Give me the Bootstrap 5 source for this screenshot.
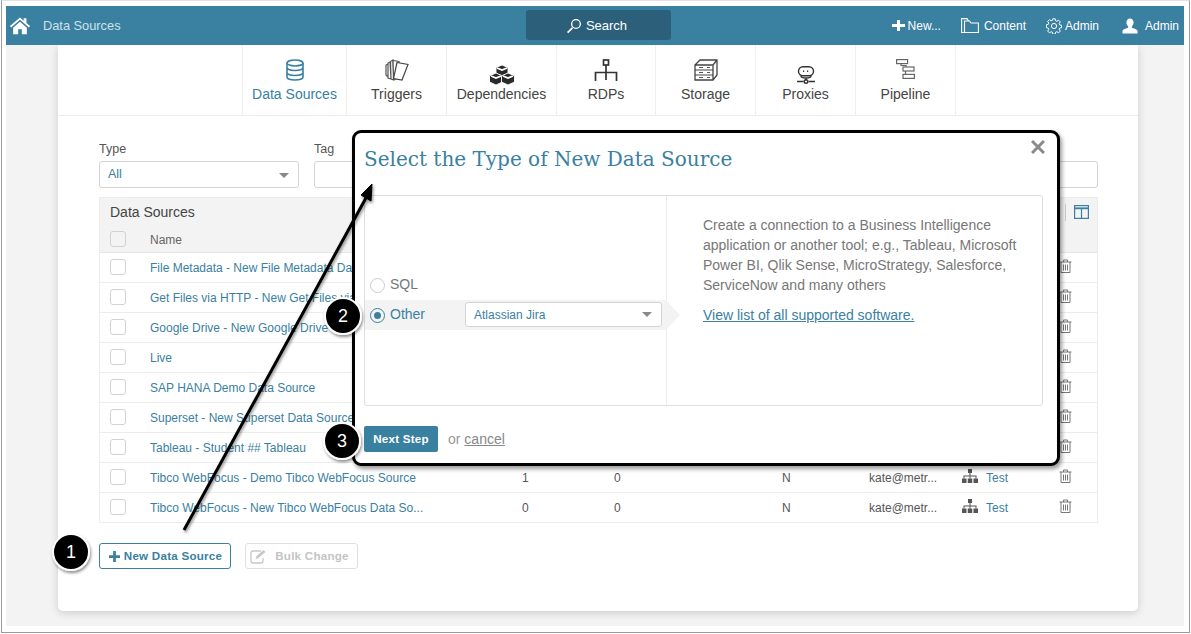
<!DOCTYPE html>
<html lang="en">
<head>
<meta charset="utf-8">
<title>Data Sources</title>
<link href="https://cdn.jsdelivr.net/npm/bootstrap@5.3.0/dist/css/bootstrap.min.css" rel="stylesheet">
<style>
html,body{height:100%;margin:0;background:#fff;overflow:hidden}
body{font-family:"Liberation Sans",Arial,sans-serif;font-size:12px;color:#555}
.shot{position:relative;width:1191px;height:634px;background:#fff;overflow:hidden}
.frame{position:absolute;inset:0 1px 1px 1px;border:1px solid #9a9a9a;border-top-color:#e2e2e2;padding:5px 5px 6px 4px;display:flex;flex-direction:column}
.topbar{height:39px;background:#3a80a1;color:#fff;flex:none;position:relative}
.topbar svg{flex:none}
.crumb{color:#cfe2ea;font-size:12.8px;margin-left:12px}
.searchbox{position:absolute;left:520px;top:4px;width:145px;height:30px;background:#2c5f79;border-radius:3px;font-size:13px;color:#fff;padding-top:1px}
.topact{font-size:12px;color:#fff;white-space:nowrap}
.stage{flex:1;background:#f3f3f3;min-height:0;padding:0 46px 15px 52px;display:flex}
.sheet{flex:1;min-width:0;background:#fff;border-radius:0 0 5px 5px;box-shadow:0 2px 8px rgba(0,0,0,.16);display:flex;flex-direction:column}
.tabstrip{height:71px;border-bottom:1px solid #ececec;padding-left:184px;flex:none}
.tabitem{height:70px;border-left:1px solid #efefef;display:flex;flex-direction:column;align-items:center;font-size:14px;color:#444;padding-top:14px}
.tabitem:last-child{border-right:1px solid #efefef}
.tabitem .ti{height:26px;display:flex;align-items:flex-start;justify-content:center}
.tabitem span{line-height:17px;margin-top:1px}
.tabitem.on{color:#3a80a1}
.lower5{margin-top:6px}
.lower7{margin-top:7px}
.fbar{padding:26px 40px 0 41px;gap:15px}
.flabel{font-size:12.5px;color:#555;line-height:14px;margin-bottom:5px}
.fsel{height:27px;border:1px solid #d4d4d4;border-radius:3px;color:#3a80a1;padding:0 8px;font-size:12.5px;line-height:25px;position:relative}
.caret{position:absolute;right:9px;top:11px;width:0;height:0;border-left:5px solid transparent;border-right:5px solid transparent;border-top:5px solid #888}
.dtable{margin:9px 40px 0 41px;border:1px solid #ececec;border-top:0}
.dhead{height:30px;background:#f3f3f3;font-size:14px;color:#444;padding:0 10px;line-height:28px;position:relative;border-top:1px solid #ececec}
.dhead .sep{position:absolute;left:965px;top:6px;width:1px;height:17px;background:#ccc}
.dhead svg{position:absolute;left:974px;top:7px}
.dtable table{table-layout:fixed;width:100%;margin:0;font-size:12px}
.dtable th,.dtable td{padding:2px 0 0;height:30px;vertical-align:middle;border-bottom:1px solid #ececec;color:#555;background:transparent;font-weight:400;white-space:nowrap;overflow:hidden;text-overflow:ellipsis;box-shadow:none}
.dtable td:first-child,.dtable th:first-child{padding-top:0}
.dtable tr:last-child td{border-bottom:0}
.dtable th{height:25px;background:#f3f3f3;border-bottom:1px solid #e6e6e6;color:#666}
.dtable td a,.lnk{color:#3a80a1;text-decoration:none}
.cbx{width:16px;height:16px;border:1px solid #d2d2d2;border-radius:3px;display:block;margin-left:10px;background:#fff}
.dtable th .cbx{background:#f3f3f3}
.btnrow{padding:20px 41px 0;gap:14px}
.btn-new{height:26px;width:132px;padding:0 0 0 1px;border:1px solid #3a80a1;border-radius:3px;color:#3a80a1;background:#fff;font-size:11.6px;font-weight:700;letter-spacing:.25px}
.btn-new svg{fill:#3a80a1}
.btn-bulk{height:26px;width:113px;padding:0 4px 0 0;border:1px solid #dfdfdf;border-radius:3px;color:#c4c4c4;background:#fff;font-size:11.6px;font-weight:700;letter-spacing:.25px}
.dlg{position:absolute;left:352px;top:130px;width:708px;height:336px;background:#fff;border:3px solid #000;border-radius:9px;box-shadow:2px 3px 4px rgba(0,0,0,.4)}
.dlg h2{font-family:"DejaVu Serif",serif;font-weight:400;font-size:20px;color:#3a80a1;margin:0;position:absolute;left:9px;top:14px;white-space:nowrap}
.dlg .xclose{position:absolute;right:12px;top:7px}
.dbody{position:absolute;left:9px;top:62px;width:679px;height:211px;border:1px solid #dedede;border-radius:3px}
.dleft{width:302px;flex:none;border-right:1px solid #ececec;position:relative;padding-top:74px}
.optrow{height:30px;font-size:14px;padding-left:5px;gap:5px;color:#777}
.optrow span{margin-top:-2px}
.optrow.on{background:#f3f3f3;color:#3a80a1;position:relative}
.optrow.on::after{content:"";position:absolute;left:301px;top:0;border-left:14px solid #f3f3f3;border-top:15px solid transparent;border-bottom:15px solid transparent}
.rad{width:15px;height:15px;border:1.5px solid #ccc;border-radius:50%;flex:none}
.rad.on{border-color:#3a80a1;position:relative}
.rad.on::after{content:"";position:absolute;inset:3px;border-radius:50%;background:#3a80a1}
.dsel{position:absolute;left:100px;top:2px;width:197px;height:25px;border:1px solid #d4d4d4;border-radius:3px;background:#fff;font-size:12px;color:#3a80a1;line-height:25px;padding-left:8px}
.dsel .caret{top:9px}
.dright{padding:19px 20px 0 36px;font-size:14px;line-height:20px;color:#777}
.dright p{margin:0 0 10px}
.dright a{color:#3a80a1;text-decoration:underline}
.dfoot{position:absolute;left:9px;top:293px;gap:10px;font-size:14px;color:#999}
.btn-next{height:26px;width:74px;padding:0;border:0;border-radius:2px;background:#3a80a1;color:#fff;font-size:11.6px;font-weight:700;letter-spacing:.25px}
.dfoot a{color:#888;text-decoration:underline}
.notes{position:absolute;left:0;top:0;pointer-events:none}
.notes text{font-family:"Liberation Sans",Arial,sans-serif;font-size:18px;font-weight:400;fill:#fff;text-anchor:middle}
</style>
</head>
<body>
<div class="shot">
<div class="frame">
  <div class="topbar d-flex align-items-center">
    <svg style="margin-left:3px" width="22" height="19" viewBox="0 0 24 20" fill="#fff"><path d="M12 1.200 1 10.600l1.300 1.500L12 3.800l9.700 8.300 1.300-1.500-4-3.400V2.200h-3v2.500zM4.500 12.500V19.500h5.500v-5.500h4v5.500h5.500v-7L12 6z"/></svg>
    <span class="crumb">Data Sources</span>
    <div class="searchbox d-flex align-items-center justify-content-center gap-1">
      <svg width="16" height="16" viewBox="0 0 16 16" fill="#fff" style="margin-left:-4px"><path d="M10 1a5 5 0 1 0 0 10 5 5 0 0 0 0-10zm0 1.300a3.700 3.700 0 1 1 0 7.400 3.700 3.700 0 0 1 0-7.400zM5.800 9.200 1 14l1.200 1.200L7 10.400z"/></svg><span>Search</span>
    </div>
    <div class="ms-auto d-flex align-items-center topact">
      <svg width="13" height="11" viewBox="0 0 13 11" fill="#fff"><path d="M5 0h3v4h5v3H8v4H5V7H0V4h5z"/></svg>
      <span style="margin-left:3px">New...</span>
      <svg style="margin-left:20px" width="18" height="15" viewBox="0 0 18 15" fill="none" stroke="#fff" stroke-width="1.100"><path d="M3.500 14.500H.6V.6h5.400l1.500 2.400"/><path d="M3.500 14.500V3h5l1.500 2h7.400v9.500z"/></svg>
      <span style="margin-left:5px">Content</span>
      <svg style="margin-left:20px" width="16" height="16" viewBox="0 0 16 16" fill="none" stroke="#fff" stroke-width="1"><path d="M6.800.8h2.400l.4 2 1.300.5 1.700-1.100 1.700 1.700-1.100 1.700.5 1.300 2 .4v2.400l-2 .4-.5 1.300 1.100 1.700-1.700 1.700-1.700-1.100-1.300.5-.4 2H6.800l-.4-2-1.300-.5-1.700 1.100-1.700-1.700 1.100-1.700-.5-1.300-2-.4V6.800l2-.4.500-1.300-1.100-1.700 1.700-1.700 1.700 1.100 1.300-.5z"/><circle cx="8" cy="8" r="2.600"/></svg>
      <span style="margin-left:3px">Admin</span>
      <svg style="margin-left:23px" width="16" height="16" viewBox="0 0 17 16" fill="#fff"><path d="M8.500 0c2.300 0 3.800 1.800 3.800 4.300 0 1.700-.8 3.200-1.800 4.100v1.400c2 .7 5.500 1.700 6 3.200v3H.5v-3c.5-1.500 4-2.500 6-3.200V8.400C5.500 7.500 4.700 6 4.700 4.300 4.700 1.800 6.200 0 8.500 0z"/></svg>
      <span style="margin-left:7px;margin-right:5px">Admin</span>
    </div>
  </div>
  <div class="stage">
    <div class="sheet">
      <div class="tabstrip d-flex">
        <div class="tabitem on" style="width:104px"><div class="ti"><svg width="18" height="22" viewBox="0 0 18 22" fill="none" stroke="#3a80a1" stroke-width="1.600"><ellipse cx="9" cy="4" rx="8" ry="3"/><path d="M1 4v14c0 1.700 3.600 3 8 3s8-1.300 8-3V4M1 8.500c0 1.700 3.600 3 8 3s8-1.300 8-3M1 13.500c0 1.700 3.600 3 8 3s8-1.300 8-3"/></svg></div><span>Data Sources</span></div>
        <div class="tabitem" style="width:100px"><div class="ti"><svg width="24" height="22" viewBox="0 0 24 22" fill="#fff" stroke="#555" stroke-width="1.200"><path d="M3 5 1 6v10l2 2zM5 3 3 4v15l3 1zM8 1 5.500 2.500 6 20l3 1z"/><path d="M8 1.500l6 1-1 17-4.500 1z"/><path d="M12 3.500l11 2-6 15.500-8.500-1.500z" stroke="#444"/></svg></div><span>Triggers</span></div>
        <div class="tabitem" style="width:110px"><div class="ti"><svg class="lower5" width="26" height="20" viewBox="0 0 26 20" fill="#2a2a2a" stroke="#fff" stroke-width=".9"><path d="M13 0l6 2.500v6L13 11 7 8.500v-6z"/><path d="M7 8l6.500 2.800v6.200L7 20 .5 17v-6.200z"/><path d="M19 8l6.500 2.800v6.200L19 20l-6.500-3v-6.200z"/><path d="M8 3l5 2 5-2" stroke-width="1.800"/><path d="M2 11l5 2 5-2M14 11l5 2 5-2" stroke-width="1.800" fill="none"/></svg></div><span>Dependencies</span></div>
        <div class="tabitem" style="width:99px"><div class="ti"><svg width="24" height="22" viewBox="0 0 24 22" fill="none" stroke="#333" stroke-width="1.700"><rect x="9.500" y="1" width="5" height="5"/><path d="M12 6v15M1.500 22v-8.500h21V22"/></svg></div><span>RDPs</span></div>
        <div class="tabitem" style="width:100px"><div class="ti"><svg width="24" height="22" viewBox="0 0 24 22" fill="none" stroke="#444" stroke-width="1.300"><path d="M1 6h18v15H1zM1 6l5-5h17v15l-4 5M19 6l4-5"/><path d="M1 11h18M1 16h18" stroke-width="1"/><path d="M5 8.500h4M5 13.500h4M5 18.500h4" stroke-width=".9"/><path d="M13 8.500h3M13 13.500h3M13 18.500h3" stroke-width=".9"/></svg></div><span>Storage</span></div>
        <div class="tabitem" style="width:100px"><div class="ti"><svg class="lower7" width="18" height="18" viewBox="0 0 18 18" fill="none" stroke="#333" stroke-width="1.400"><rect x="1.500" y=".8" width="15" height="9" rx="4.500"/><path d="M6 5.300h1.200M10 5.300h1.200" stroke-width="1.400"/><path d="M4 10c0 1.500 2 2 5 2s5-.5 5-2M9 12v2.500M0 15.500h6.500M11.500 15.500H18"/><circle cx="9" cy="15.500" r="1.800"/></svg></div><span>Proxies</span></div>
        <div class="tabitem" style="width:101px"><div class="ti"><svg width="19" height="20" viewBox="0 0 19 20" fill="none" stroke="#666" stroke-width="1.200"><rect x=".6" y=".6" width="11" height="4"/><rect x="7" y="8" width="11" height="4"/><rect x="7" y="15.400" width="11.400" height="4"/><path d="M5 4.600v1.900h5V8M9.500 12v3.400"/></svg></div><span>Pipeline</span></div>
      </div>
      <div class="fbar d-flex">
        <div style="width:200px"><div class="flabel">Type</div><div class="fsel">All<i class="caret"></i></div></div>
        <div class="flex-grow-1"><div class="flabel">Tag</div><div class="fsel"></div></div>
      </div>
      <div class="dtable">
        <div class="dhead">Data Sources<i class="sep"></i>
          <svg width="15" height="14" viewBox="0 0 15 14" fill="none" stroke="#3a80a1" stroke-width="1.200"><rect x=".6" y=".6" width="13.800" height="12.800"/><path d="M.6 3.300h13.800" stroke-width="1.800"/><path d="M7.500 3v10"/></svg>
        </div>
        <table class="table">
          <colgroup><col style="width:40px"><col style="width:290px"><col style="width:92px"><col style="width:92px"><col style="width:92px"><col style="width:76px"><col style="width:87px"><col style="width:100px"><col></colgroup>
          <thead><tr><th><i class="cbx"></i></th><th style="padding-left:10px" colspan="8">Name</th></tr></thead>
          <tbody>
            <tr><td><i class="cbx"></i></td><td colspan="2" style="padding-left:10px"><a href="#">File Metadata - New File Metadata Data Source</a></td><td colspan="3"></td><td></td><td colspan="2"></td></tr>
            <tr><td><i class="cbx"></i></td><td colspan="2" style="padding-left:10px"><a href="#">Get Files via HTTP - New Get Files via HTTP Source</a></td><td colspan="3"></td><td></td><td colspan="2"></td></tr>
            <tr><td><i class="cbx"></i></td><td colspan="2" style="padding-left:10px"><a href="#">Google Drive - New Google Drive Data Source</a></td><td colspan="3"></td><td></td><td colspan="2"></td></tr>
            <tr><td><i class="cbx"></i></td><td colspan="2" style="padding-left:10px"><a href="#">Live</a></td><td colspan="3"></td><td></td><td colspan="2"></td></tr>
            <tr><td><i class="cbx"></i></td><td colspan="2" style="padding-left:10px"><a href="#">SAP HANA Demo Data Source</a></td><td colspan="3"></td><td></td><td colspan="2"></td></tr>
            <tr><td><i class="cbx"></i></td><td colspan="2" style="padding-left:10px"><a href="#">Superset - New Superset Data Source</a></td><td colspan="3"></td><td></td><td colspan="2"></td></tr>
            <tr><td><i class="cbx"></i></td><td colspan="2" style="padding-left:10px"><a href="#">Tableau - Student ## Tableau</a></td><td colspan="3"></td><td></td><td colspan="2"></td></tr>
            <tr><td><i class="cbx"></i></td><td colspan="2" style="padding-left:10px"><a href="#">Tibco WebFocus - Demo Tibco WebFocus Source</a></td><td>1</td><td>0</td><td></td><td>N</td><td colspan="2">kate@metr...</td></tr>
            <tr><td><i class="cbx"></i></td><td colspan="2" style="padding-left:10px"><a href="#">Tibco WebFocus - New Tibco WebFocus Data So...</a></td><td>0</td><td>0</td><td></td><td>N</td><td colspan="2">kate@metr...</td></tr>
          </tbody>
        </table>
      </div>
      <div class="btnrow d-flex">
        <button class="btn btn-new d-flex align-items-center justify-content-center gap-1"><svg width="11" height="11" viewBox="0 0 12 12"><path d="M4.500 0h3v4.500H12v3H7.500V12h-3V7.500H0v-3h4.500z"/></svg>New Data Source</button>
        <button class="btn btn-bulk d-flex align-items-center justify-content-center gap-2"><svg width="17" height="15" viewBox="0 0 17 15" fill="none" stroke="#c8c8c8" stroke-width="1.300"><path d="M11 2H3a2 2 0 0 0-2 2v8a2 2 0 0 0 2 2h8a2 2 0 0 0 2-2V9"/><path d="M5.500 10.500l1-3.500 7-6 2 2-7 6z" fill="#c8c8c8" stroke="none"/></svg>Bulk Change</button>
      </div>
    </div>
  </div>
</div>

<svg class="notes" width="1191" height="634" viewBox="0 0 1191 634">
  <defs>
    <g id="trash" fill="none" stroke="#777" stroke-width="1"><path d="M.5 3h12M4.500 3V1h4v2M2 3v10.500h9V3"/><path d="M4.500 5.500v6M6.500 5.500v6M8.500 5.500v6"/></g>
    <g id="tree" fill="#555"><rect x="6" y="0" width="4" height="4"/><rect x="0" y="9.500" width="4.500" height="4.500"/><rect x="5.750" y="9.500" width="4.500" height="4.500"/><rect x="11.500" y="9.500" width="4.500" height="4.500"/><path d="M7.500 4h1v2.500h6v3h-1V7.500h-5v2h-1v-2h-5v2h-1v-3h6z"/></g>
  </defs>
  <use href="#trash" x="1059" y="259"/><use href="#trash" x="1059" y="289"/><use href="#trash" x="1059" y="319"/><use href="#trash" x="1059" y="349"/><use href="#trash" x="1059" y="379"/><use href="#trash" x="1059" y="409"/><use href="#trash" x="1059" y="439"/><use href="#trash" x="1059" y="469"/><use href="#trash" x="1059" y="499"/>
  <use href="#tree" x="962" y="469"/><use href="#tree" x="962" y="499"/>
</svg>
<a class="lnk position-absolute" href="#" style="left:986px;top:469px;font-size:12px">Test</a>
<a class="lnk position-absolute" href="#" style="left:986px;top:499px;font-size:12px">Test</a>

<div class="dlg">
  <h2>Select the Type of New Data Source</h2>
  <svg class="xclose" width="14" height="14" viewBox="0 0 14 14" stroke="#8a8a8a" stroke-width="3"><path d="M1 1l12 12M13 1 1 13"/></svg>
  <div class="dbody d-flex">
    <div class="dleft">
      <div class="optrow d-flex align-items-center"><i class="rad"></i><span>SQL</span></div>
      <div class="optrow on d-flex align-items-center"><i class="rad on"></i><span>Other</span>
        <div class="dsel">Atlassian Jira<i class="caret"></i></div></div>
    </div>
    <div class="dright flex-grow-1">
      <p>Create a connection to a Business Intelligence application or another tool; e.g., Tableau, Microsoft Power BI, Qlik Sense, MicroStrategy, Salesforce, ServiceNow and many others</p>
      <a href="#">View list of all supported software.</a>
    </div>
  </div>
  <div class="dfoot d-flex align-items-center">
    <button class="btn btn-next">Next Step</button><span>or <a href="#">cancel</a></span>
  </div>
</div>

<svg class="notes" width="1191" height="634" viewBox="0 0 1191 634">
  <defs><filter id="ds" x="-30%" y="-30%" width="160%" height="160%"><feDropShadow dx="1" dy="2" stdDeviation="1.500" flood-color="#000" flood-opacity=".45"/></filter></defs>
  <g filter="url(#ds)">
    <path d="M184 530 367 196" stroke="#000" stroke-width="3" fill="none"/>
    <path d="M372 184 361 195 371 201z" fill="#000" stroke="#000" stroke-width="1"/>
  </g>
  <g filter="url(#ds)"><circle cx="71" cy="552" r="18" fill="#000" stroke="#fff" stroke-width="2"/></g>
  <text x="71" y="558">1</text>
  <g filter="url(#ds)"><circle cx="343" cy="316" r="18" fill="#000" stroke="#fff" stroke-width="2"/></g>
  <text x="343" y="322">2</text>
  <g filter="url(#ds)"><circle cx="342" cy="441" r="18" fill="#000" stroke="#fff" stroke-width="2"/></g>
  <text x="342" y="447">3</text>
</svg>
</div>
<script src="https://cdn.jsdelivr.net/npm/bootstrap@5.3.0/dist/js/bootstrap.bundle.min.js"></script>
</body>
</html>
